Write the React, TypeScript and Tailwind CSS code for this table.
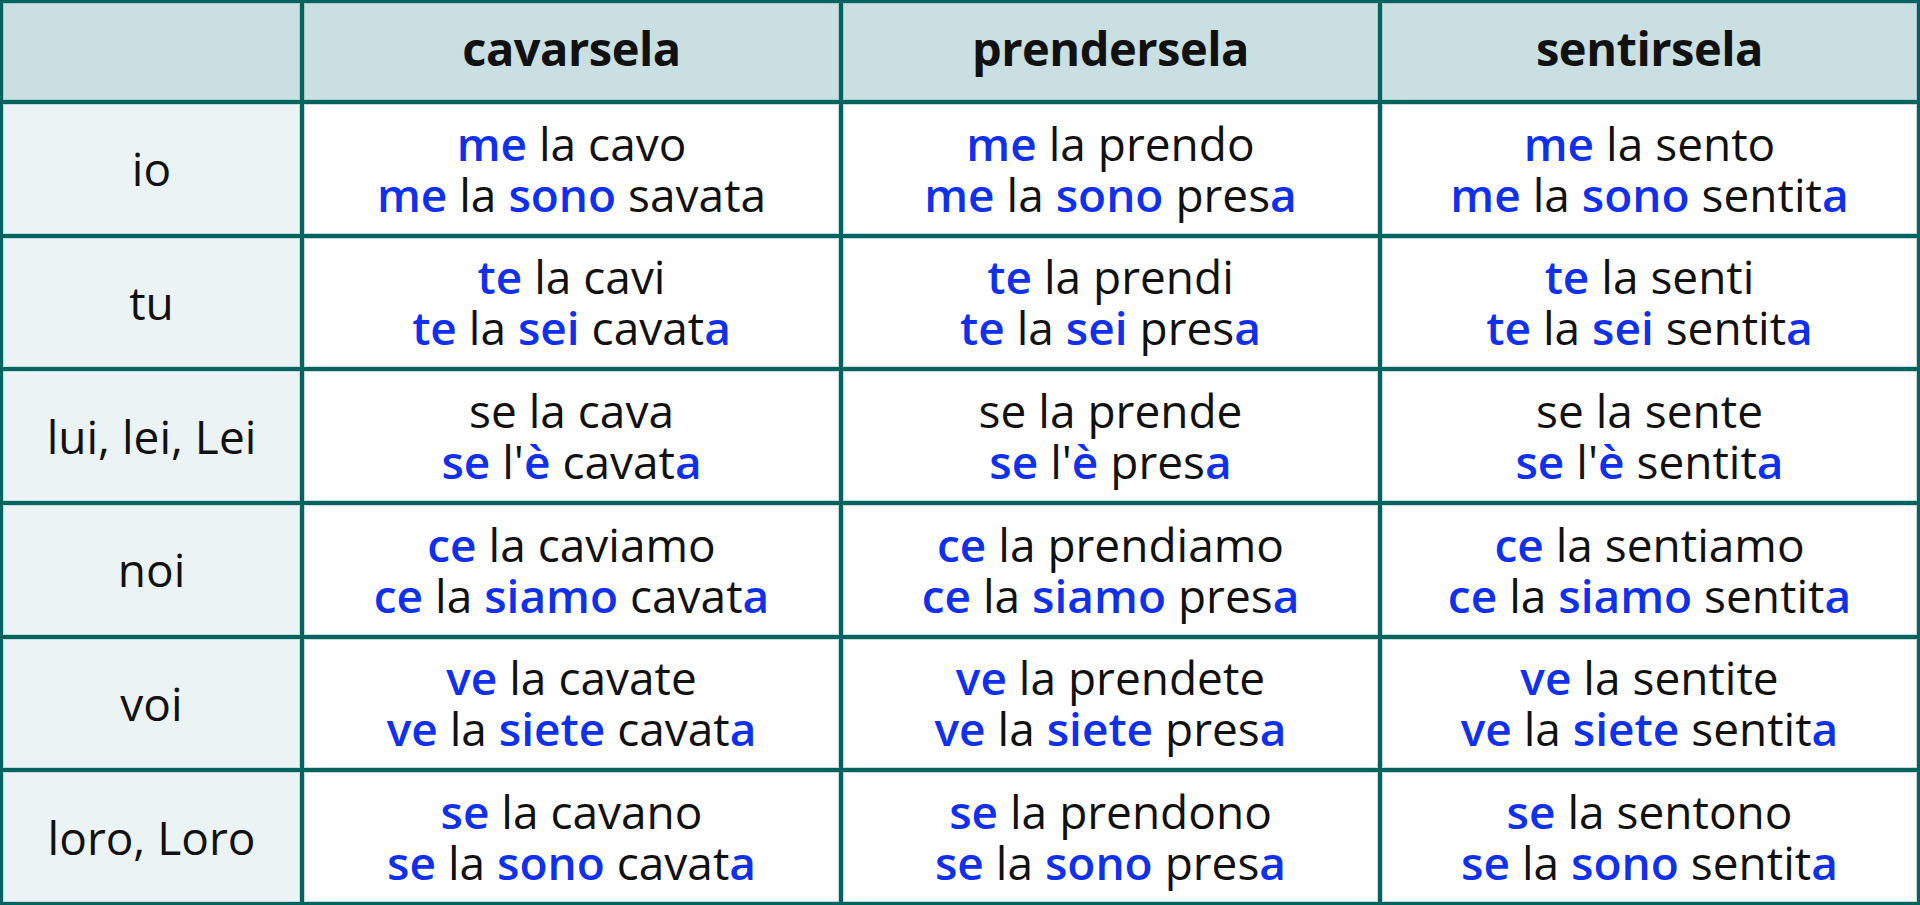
import React from "react";

type Seg = [string, boolean];

const B = (t: string): Seg => [t, true];
const N = (t: string): Seg => [t, false];

const headers = ["cavarsela", "prendersela", "sentirsela"];

const rows: { p: string; cells: Seg[][][] }[] = [
  {
    p: "io",
    cells: [
      [[B("me"), N(" la cavo")], [B("me"), N(" la "), B("sono"), N(" savata")]],
      [[B("me"), N(" la prendo")], [B("me"), N(" la "), B("sono"), N(" pres"), B("a")]],
      [[B("me"), N(" la sento")], [B("me"), N(" la "), B("sono"), N(" sentit"), B("a")]],
    ],
  },
  {
    p: "tu",
    cells: [
      [[B("te"), N(" la cavi")], [B("te"), N(" la "), B("sei"), N(" cavat"), B("a")]],
      [[B("te"), N(" la prendi")], [B("te"), N(" la "), B("sei"), N(" pres"), B("a")]],
      [[B("te"), N(" la senti")], [B("te"), N(" la "), B("sei"), N(" sentit"), B("a")]],
    ],
  },
  {
    p: "lui, lei, Lei",
    cells: [
      [[N("se la cava")], [B("se"), N(" l'"), B("è"), N(" cavat"), B("a")]],
      [[N("se la prende")], [B("se"), N(" l'"), B("è"), N(" pres"), B("a")]],
      [[N("se la sente")], [B("se"), N(" l'"), B("è"), N(" sentit"), B("a")]],
    ],
  },
  {
    p: "noi",
    cells: [
      [[B("ce"), N(" la caviamo")], [B("ce"), N(" la "), B("siamo"), N(" cavat"), B("a")]],
      [[B("ce"), N(" la prendiamo")], [B("ce"), N(" la "), B("siamo"), N(" pres"), B("a")]],
      [[B("ce"), N(" la sentiamo")], [B("ce"), N(" la "), B("siamo"), N(" sentit"), B("a")]],
    ],
  },
  {
    p: "voi",
    cells: [
      [[B("ve"), N(" la cavate")], [B("ve"), N(" la "), B("siete"), N(" cavat"), B("a")]],
      [[B("ve"), N(" la prendete")], [B("ve"), N(" la "), B("siete"), N(" pres"), B("a")]],
      [[B("ve"), N(" la sentite")], [B("ve"), N(" la "), B("siete"), N(" sentit"), B("a")]],
    ],
  },
  {
    p: "loro, Loro",
    cells: [
      [[B("se"), N(" la cavano")], [B("se"), N(" la "), B("sono"), N(" cavat"), B("a")]],
      [[B("se"), N(" la prendono")], [B("se"), N(" la "), B("sono"), N(" pres"), B("a")]],
      [[B("se"), N(" la sentono")], [B("se"), N(" la "), B("sono"), N(" sentit"), B("a")]],
    ],
  },
];

function Line({ segs }: { segs: Seg[] }) {
  return (
    <div className="whitespace-pre">
      {segs.map(([t, b], i) =>
        b ? (
          <span key={i} className="font-semibold text-[#1030f0]">
            {t}
          </span>
        ) : (
          <span key={i}>{t}</span>
        )
      )}
    </div>
  );
}

export default function App() {
  return (
    <div
      className="w-[1920px] h-[905px] bg-[#03635f] p-[3px] grid grid-cols-[297px_1fr_1fr_1fr] grid-rows-[97px_repeat(6,1fr)] gap-[4px] text-[#111111]"
      style={{ fontFamily: '"Open Sans", "Noto Sans", sans-serif' }}
    >
      <div className="bg-[#c9dfe1] border border-[#a9c9ca]" />
      {headers.map((h) => (
        <div
          key={h}
          className="bg-[#c9dfe1] border border-[#a9c9ca] flex items-center justify-center text-[47px] font-bold tracking-[-0.5px] pb-[6px]"
        >
          {h}
        </div>
      ))}
      {rows.map((r) => (
        <React.Fragment key={r.p}>
          <div className="bg-[#ebf3f4] border border-[#c4d9da] flex items-center justify-center text-[46px]">
            {r.p}
          </div>
          {r.cells.map((c, i) => (
            <div
              key={i}
              className="bg-white border border-[#c4d9da] flex flex-col items-center justify-center text-[46px] leading-[51px]"
            >
              {c.map((segs, j) => (
                <Line key={j} segs={segs} />
              ))}
            </div>
          ))}
        </React.Fragment>
      ))}
    </div>
  );
}
